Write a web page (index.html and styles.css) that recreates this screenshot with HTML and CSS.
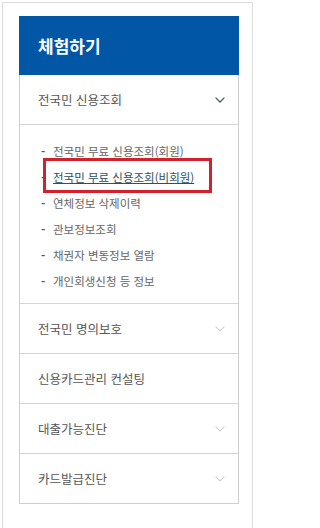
FILE: index.html
```html
<!DOCTYPE html>
<html lang="ko">
<head>
<meta charset="utf-8">
<link rel="stylesheet" href="styles.css">
</head>
<body>
<div class="frame">
  <div class="panel">
    <div class="head">체험하기</div>
    <ul class="menu">
      <li class="row open"><span>전국민 신용조회</span><svg class="chev dark" viewBox="0 0 10 6" width="10" height="6"><path d="M0.6 0.6 L5 5 L9.4 0.6" fill="none" stroke="currentColor" stroke-width="1.3"/></svg></li>
      <li class="sub">
        <ul class="subs">
          <li><span class="dash">-</span>전국민 무료 신용조회(회원)</li>
          <li class="active"><span class="dash">-</span><a>전국민 무료 신용조회(비회원)</a><span class="mark"></span></li>
          <li><span class="dash">-</span>연체정보 삭제이력</li>
          <li><span class="dash">-</span>관보정보조회</li>
          <li><span class="dash">-</span>채권자 변동정보 열람</li>
          <li><span class="dash">-</span>개인회생신청 등 정보</li>
        </ul>
      </li>
      <li class="row"><span>전국민 명의보호</span><svg class="chev" viewBox="0 0 10 6" width="10" height="6"><path d="M0.6 0.6 L5 5 L9.4 0.6" fill="none" stroke="currentColor" stroke-width="1.1"/></svg></li>
      <li class="row"><span>신용카드관리 컨설팅</span></li>
      <li class="row"><span>대출가능진단</span><svg class="chev" viewBox="0 0 10 6" width="10" height="6"><path d="M0.6 0.6 L5 5 L9.4 0.6" fill="none" stroke="currentColor" stroke-width="1.1"/></svg></li>
      <li class="row last"><span>카드발급진단</span><svg class="chev" viewBox="0 0 10 6" width="10" height="6"><path d="M0.6 0.6 L5 5 L9.4 0.6" fill="none" stroke="currentColor" stroke-width="1.1"/></svg></li>
    </ul>
  </div>
</div>
</body>
</html>
```

FILE: styles.css
```css
html, body {
  margin: 0;
  padding: 0;
  background: #fff;
}
body {
  font-family: "Noto Sans CJK KR", "Noto Sans", sans-serif;
}
.frame {
  margin: 2px 0 0 2px;
  width: 249px;
  height: 523px;
  border: 1px solid #dcdcdc;
  padding-top: 13px;
  box-sizing: content-box;
}
.panel {
  margin-left: 16px;
  width: 220px;
}
.head {
  height: 59px;
  background: #0256a6;
  color: #fff;
  font-size: 17px;
  font-weight: 700;
  line-height: 59px;
  padding-left: 19px;
}
.menu {
  list-style: none;
  margin: 0;
  padding: 0;
  border: 1px solid #cfcfcf;
  border-top: none;
}
.row {
  height: 49px;
  border-bottom: 1px solid #d4d4d4;
  display: flex;
  align-items: center;
  justify-content: space-between;
  padding: 0 13px 0 18px;
  font-size: 12.5px;
  color: #555;
}
.row.last {
  border-bottom: none;
}
.chev {
  color: #d0d0d0;
  display: block;
}
.chev.dark {
  color: #3f5f66;
}
.sub {
  border-bottom: 1px solid #d4d4d4;
}
.subs {
  list-style: none;
  margin: 0;
  padding: 13px 0 9px 21px;
}
.subs li {
  position: relative;
  height: 26px;
  line-height: 26px;
  font-size: 11.5px;
  color: #666;
}
.dash {
  display: inline-block;
  width: 12px;
  color: #3b5f6b;
  font-weight: 700;
}
.subs li.active a {
  color: #2e5060;
  text-decoration: underline;
}
.mark {
  position: absolute;
  left: 2px;
  top: -6px;
  width: 163px;
  height: 29px;
  border: 3px solid #d2202c;
}
```
